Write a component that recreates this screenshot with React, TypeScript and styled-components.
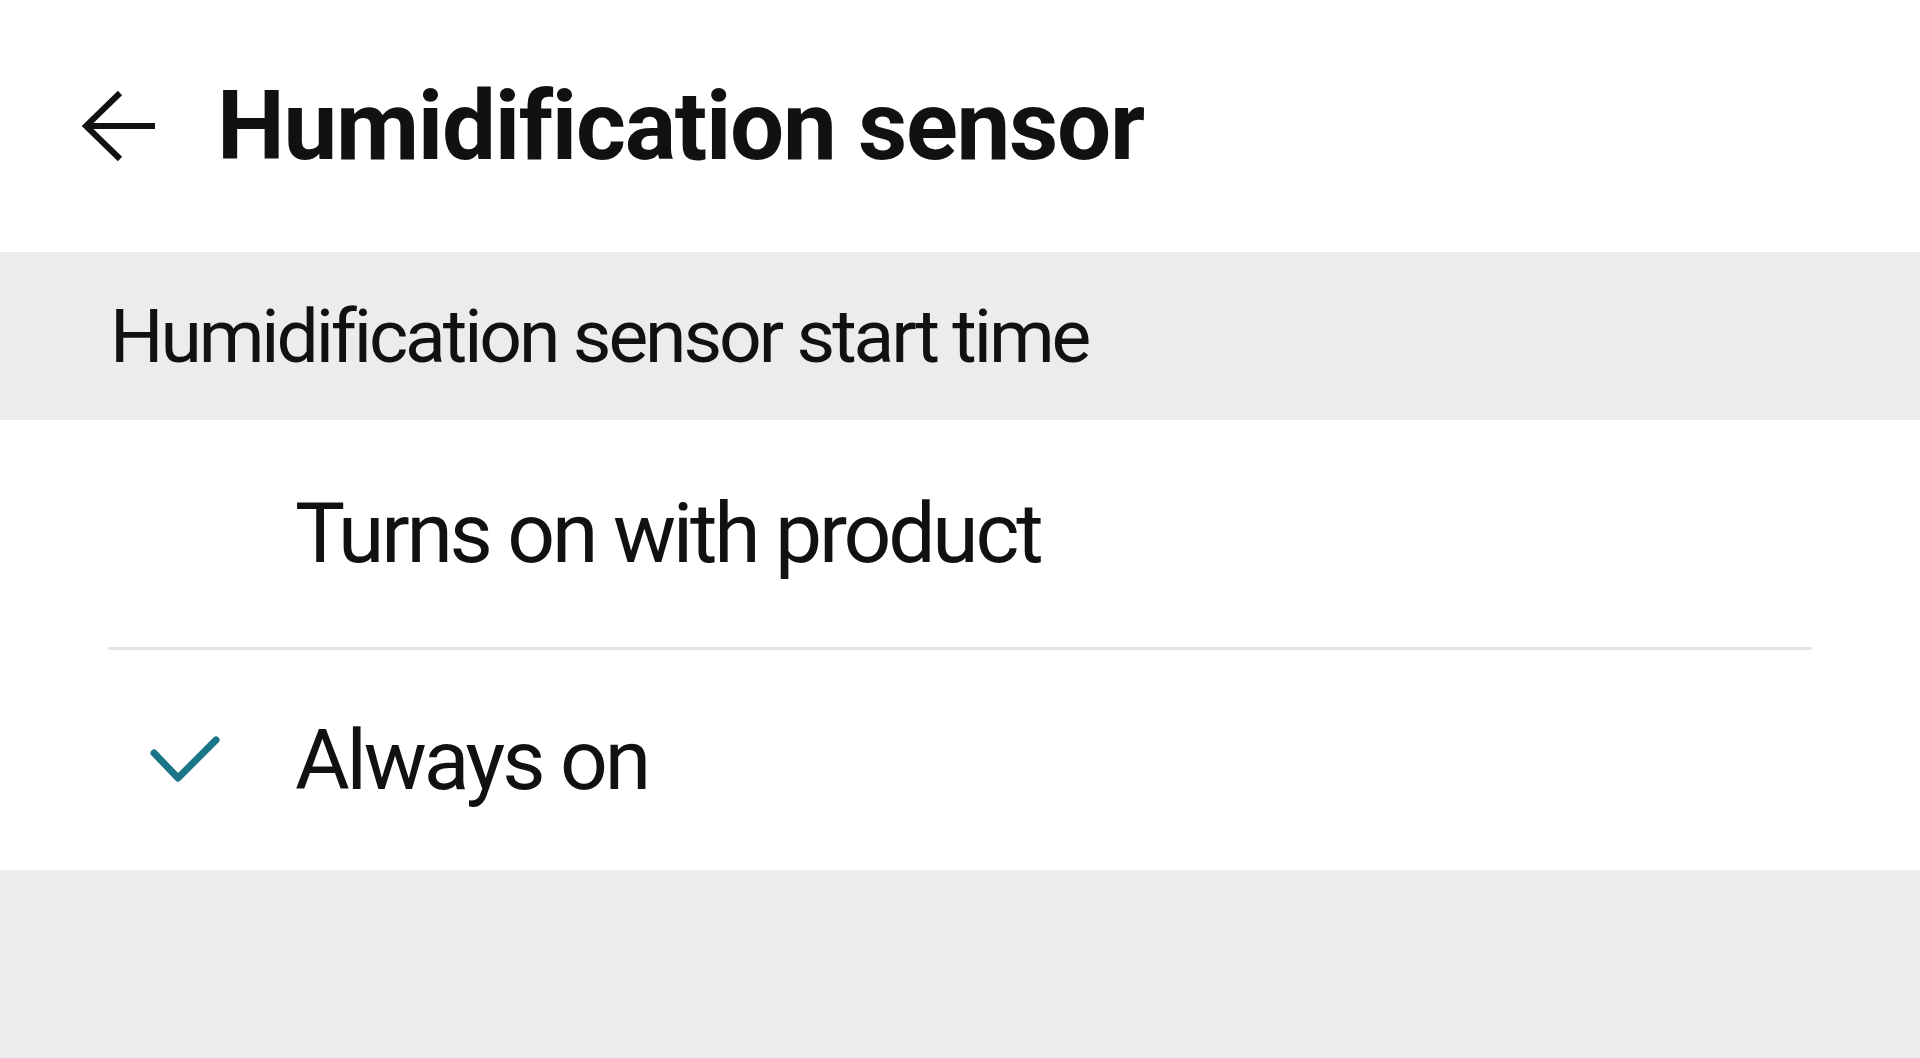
import React from 'react';
import styled, { createGlobalStyle } from 'styled-components';

const GlobalStyle = createGlobalStyle`
  html, body {
    margin: 0;
    padding: 0;
    background: #ececec;
  }
  body {
    font-family: Roboto, Inter, 'Liberation Sans', sans-serif;
    color: #111111;
  }
`;

const Page = styled.div`
  min-height: 100vh;
  display: flex;
  flex-direction: column;
  background: #ececec;
`;

const Header = styled.header`
  height: 252px;
  background: #ffffff;
  display: flex;
  align-items: center;
  padding-left: 81px;
  box-sizing: border-box;
`;

const BackButton = styled.button`
  border: none;
  background: none;
  padding: 0;
  margin: 0 60px 0 0;
  display: flex;
  align-items: center;
  cursor: pointer;
`;

const Title = styled.h1`
  margin: 0;
  font-size: 96px;
  font-weight: 700;
  letter-spacing: -1.3px;
  line-height: 1;
  color: #111111;
`;

const SectionHeader = styled.div`
  height: 168px;
  display: flex;
  align-items: center;
  padding-left: 110px;
  box-sizing: border-box;
  font-size: 75px;
  font-weight: 400;
  letter-spacing: -3.1px;
  color: #111111;
`;

const List = styled.div`
  background: #ffffff;
`;

const Row = styled.div<{ $height: number }>`
  height: ${(p) => p.$height}px;
  display: grid;
  grid-template-columns: 147px 1fr;
  align-items: center;
  padding-left: 148px;
  box-sizing: border-box;
  font-size: 84px;
  letter-spacing: -3.2px;
  color: #111111;
  cursor: pointer;
`;

const CheckSlot = styled.div`
  display: flex;
  align-items: center;
`;

const Divider = styled.div`
  height: 3px;
  margin: 0 108px;
  background: #e4e4e4;
`;

const BackArrow = () => (
  <svg width="76" height="72" viewBox="0 0 76 72" fill="none">
    <path
      d="M74 36 H5 M39 3 L5 36 L39 69"
      stroke="#111111"
      strokeWidth="6"
      strokeLinecap="butt"
      strokeLinejoin="miter"
    />
  </svg>
);

const Check = () => (
  <svg width="80" height="60" viewBox="0 0 80 60" fill="none">
    <path
      d="M6 23 L30 48 L68 10"
      stroke="#1a7686"
      strokeWidth="7"
      strokeLinecap="round"
      strokeLinejoin="round"
    />
  </svg>
);

const options = [
  { label: 'Turns on with product', selected: false },
  { label: 'Always on', selected: true },
];

export default function App() {
  return (
    <Page>
      <GlobalStyle />
      <Header>
        <BackButton aria-label="Back">
          <BackArrow />
        </BackButton>
        <Title>Humidification sensor</Title>
      </Header>
      <SectionHeader>Humidification sensor start time</SectionHeader>
      <List>
        {options.map((o, i) => (
          <React.Fragment key={o.label}>
            {i > 0 && <Divider />}
            <Row $height={i === 0 ? 227 : 220}>
              <CheckSlot>{o.selected && <Check />}</CheckSlot>
              <span>{o.label}</span>
            </Row>
          </React.Fragment>
        ))}
      </List>
    </Page>
  );
}
